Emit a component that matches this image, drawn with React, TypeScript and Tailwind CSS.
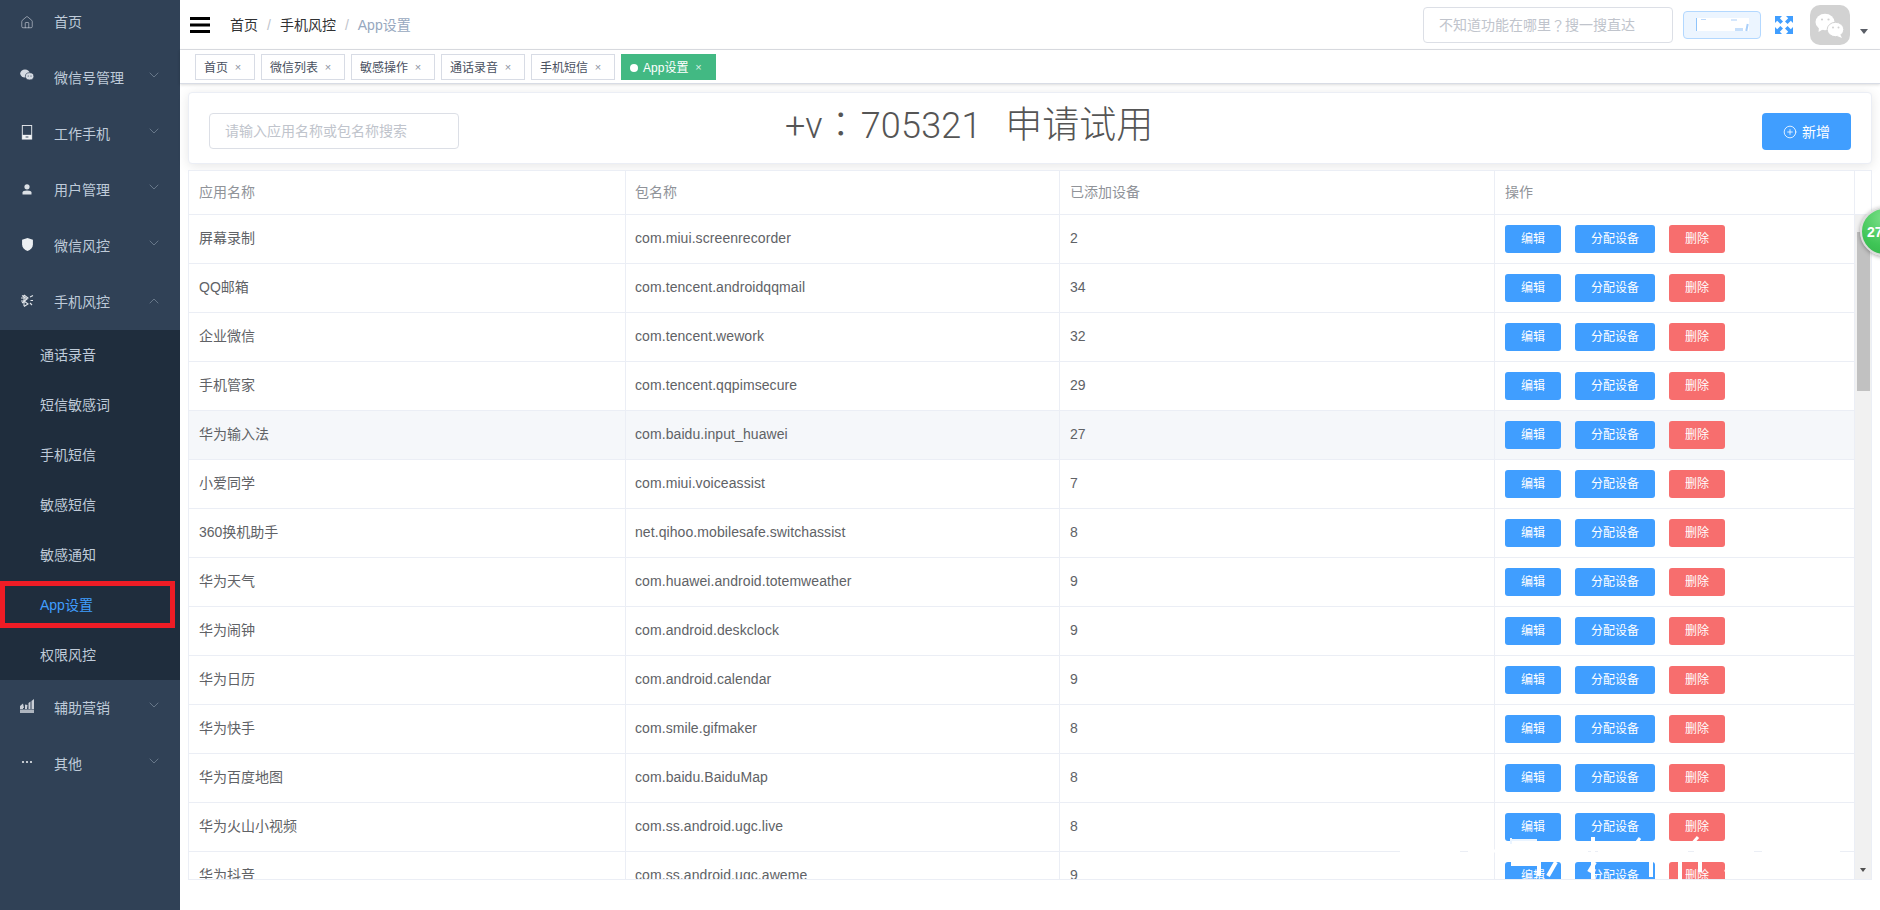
import React from "react";
import { ChevronDown, ChevronUp, CirclePlus, House } from "lucide-react";

const WeChat = () => (
  <svg viewBox="0 0 14 12" className="h-[12px] w-[14px] -translate-y-px" fill="#d5dbe3">
    <ellipse cx="5" cy="4.5" rx="4.8" ry="4" />
    <ellipse cx="9.6" cy="7.3" rx="4.2" ry="3.6" stroke="#304156" strokeWidth="0.7" />
    <circle cx="8.2" cy="7" r="0.6" fill="#304156" />
    <circle cx="11" cy="7" r="0.6" fill="#304156" />
  </svg>
);
const Phone = () => (
  <svg viewBox="0 0 12 16" className="h-[15px] w-[12px]">
    <rect x="1" y="0.5" width="10" height="14.5" fill="none" stroke="#e6e9ed" />
    <rect x="1" y="10.5" width="10" height="4.5" fill="#f1f3f5" />
    <rect x="4.5" y="12.3" width="3" height="1" fill="#304156" />
  </svg>
);
const UserIco = () => (
  <svg viewBox="0 0 10 11" className="h-[11px] w-[10px] translate-y-px" fill="#dbe0e6">
    <circle cx="5" cy="2.8" r="2.6" />
    <path d="M0.5 10.5V8.6C0.5 7.2 2 6.4 5 6.4s4.5.8 4.5 2.2v1.9z" />
  </svg>
);
const Shield = () => (
  <svg viewBox="0 0 10 12" className="h-[13px] w-[11px]" fill="#eceff2">
    <path d="M5 0 10 1.5V6c0 3-2.2 5-5 6-2.8-1-5-3-5-6V1.5z" />
  </svg>
);
const Spiky = () => (
  <svg viewBox="0 0 14 13" className="h-[13px] w-[14px]" fill="none" stroke="#dfe3e8" strokeWidth="1.1">
    <path d="M2 1.5 7 5 2 9M4 1v11M4 1l4 3-4 3 4 3-4 2.5M10 3l3-1.5M10.5 6.5H13M10 9l2 2" />
    <path d="M1 4h3M1 7h3" />
  </svg>
);
const Chart = () => (
  <svg viewBox="0 0 14 14" className="h-[14px] w-[14px]" fill="#c9ced6">
    <path d="M0 7 3 4.5 4 9H3v1H0zM5 5.5 7.5 6 7 10H5zM8.5 4l2-1.5V10h-2zM11.5 2 14 0v10h-2.5z" />
    <rect x="0" y="10.5" width="14" height="3.5" fill="#aeb5bf" />
  </svg>
);
const Dots = () => (
  <svg viewBox="0 0 14 4" className="h-[4px] w-[14px]" fill="#e6e9ed">
    <circle cx="3" cy="2" r="1.1" />
    <circle cx="7" cy="2" r="1.1" />
    <circle cx="11" cy="2" r="1.1" />
  </svg>
);

function MenuItem({ icon, label, arrow }: { icon: React.ReactNode; label: string; arrow?: "up" | "down" }) {
  return (
    <div className="flex h-[56px] items-center text-sm text-[#bfcbd9]">
      <span className="ml-5 mb-1 flex w-[14px] shrink-0 justify-center">{icon}</span>
      <span className="ml-5">{label}</span>
      {arrow === "down" && <ChevronDown size={16} strokeWidth={1} className="ml-auto mr-[18px] mb-[6px] text-[#8492a3]" />}
      {arrow === "up" && <ChevronUp size={16} strokeWidth={1} className="ml-auto mr-[18px] mb-[2px] text-[#8492a3]" />}
    </div>
  );
}

const subItems = ["通话录音", "短信敏感词", "手机短信", "敏感短信", "敏感通知", "App设置", "权限风控"];
const tags = ["首页", "微信列表", "敏感操作", "通话录音", "手机短信"];
const rows: [string, string, string][] = [
  ["屏幕录制", "com.miui.screenrecorder", "2"],
  ["QQ邮箱", "com.tencent.androidqqmail", "34"],
  ["企业微信", "com.tencent.wework", "32"],
  ["手机管家", "com.tencent.qqpimsecure", "29"],
  ["华为输入法", "com.baidu.input_huawei", "27"],
  ["小爱同学", "com.miui.voiceassist", "7"],
  ["360换机助手", "net.qihoo.mobilesafe.switchassist", "8"],
  ["华为天气", "com.huawei.android.totemweather", "9"],
  ["华为闹钟", "com.android.deskclock", "9"],
  ["华为日历", "com.android.calendar", "9"],
  ["华为快手", "com.smile.gifmaker", "8"],
  ["华为百度地图", "com.baidu.BaiduMap", "8"],
  ["华为火山小视频", "com.ss.android.ugc.live", "8"],
  ["华为抖音", "com.ss.android.ugc.aweme", "9"],
];

const Fullscreen = () => (
  <svg viewBox="0 0 18 18" className="h-[18px] w-[18px]" fill="#409eff">
    <path d="M0 0h7L4.8 2.2 8 5.4 5.4 8 2.2 4.8 0 7z" />
    <path d="M18 0h-7l2.2 2.2L10 5.4 12.6 8l3.2-3.2L18 7z" />
    <path d="M0 18h7l-2.2-2.2L8 12.6 5.4 10l-3.2 3.2L0 11z" />
    <path d="M18 18h-7l2.2-2.2-3.2-3.2 2.6-2.6 3.2 3.2L18 11z" />
  </svg>
);

const Avatar = () => (
  <div className="flex h-10 w-10 items-center justify-center rounded-[10px] bg-[#d2d2d2]">
    <svg viewBox="0 0 40 40" className="h-10 w-10">
      <ellipse cx="15" cy="17" rx="9.5" ry="8.3" fill="#fff" />
      <path d="M9 22l-.5 5 5-3z" fill="#fff" />
      <ellipse cx="25.5" cy="24.5" rx="8.3" ry="7.2" fill="#fff" stroke="#d2d2d2" strokeWidth="1" />
      <path d="M30 29l2 4-5-2z" fill="#fff" />
      <circle cx="12" cy="14.5" r="1.1" fill="#d2d2d2" />
      <circle cx="18.5" cy="14.5" r="1.1" fill="#d2d2d2" />
      <circle cx="23" cy="22.5" r="1" fill="#d2d2d2" />
      <circle cx="28.5" cy="22.5" r="1" fill="#d2d2d2" />
    </svg>
  </div>
);

function Row({ r, hover }: { r: [string, string, string]; hover: boolean }) {
  return (
    <div className={`grid h-[49px] shrink-0 grid-cols-[437px_434px_435px_360px] border-b border-[#ebeef5] text-sm text-[#606266] ${hover ? "bg-[#f5f7fa]" : "bg-white"}`}>
      <div className="flex items-center border-r border-[#ebeef5] pb-[2px] pl-[10px]">{r[0]}</div>
      <div className="flex items-center border-r border-[#ebeef5] pb-[2px] pl-[9px] tracking-[0.08px]">{r[1]}</div>
      <div className="flex items-center border-r border-[#ebeef5] pb-[2px] pl-[10px]">{r[2]}</div>
      <div className="flex items-center gap-[14px] border-r border-[#ebeef5] pl-[10px] text-xs text-white">
        <span className="flex h-7 w-14 items-center justify-center rounded-[3px] bg-[#409eff]">编辑</span>
        <span className="flex h-7 w-20 items-center justify-center rounded-[3px] bg-[#409eff]">分配设备</span>
        <span className="flex h-7 w-14 items-center justify-center rounded-[3px] bg-[#f76e6e]">删除</span>
      </div>
    </div>
  );
}

export default function App() {
  return (
    <div className="relative flex h-[910px] w-[1880px] overflow-hidden bg-white font-[family-name:'Liberation_Sans','Noto_Sans_CJK_SC',sans-serif]">
      <aside className="w-[180px] shrink-0 overflow-hidden bg-[#304156]">
        <div className="-mt-[6px]">
          <MenuItem icon={<House size={17} strokeWidth={1} className="translate-y-[2px] text-[#d5dbe3]" />} label="首页" />
          <MenuItem icon={<WeChat />} label="微信号管理" arrow="down" />
          <MenuItem icon={<Phone />} label="工作手机" arrow="down" />
          <MenuItem icon={<UserIco />} label="用户管理" arrow="down" />
          <MenuItem icon={<Shield />} label="微信风控" arrow="down" />
          <MenuItem icon={<Spiky />} label="手机风控" arrow="up" />
          <div className="bg-[#1f2d3d]">
            {subItems.map((s) => (
              <div key={s} className={`flex h-[50px] items-center pl-10 text-sm ${s === "App设置" ? "text-[#409eff]" : "text-[#bfcbd9]"}`}>
                {s}
              </div>
            ))}
          </div>
          <MenuItem icon={<Chart />} label="辅助营销" arrow="down" />
          <MenuItem icon={<Dots />} label="其他" arrow="down" />
        </div>
      </aside>

      <main className="flex w-[1700px] flex-col">
        <header className="flex h-[50px] shrink-0 items-center border-b border-[#dfe1e6] pl-[10px]">
          <svg viewBox="0 0 20 16" className="h-4 w-5">
            <rect y="0" width="20" height="3" fill="#000" />
            <rect y="6.5" width="20" height="3" fill="#000" />
            <rect y="13" width="20" height="3" fill="#000" />
          </svg>
          <nav className="ml-5 flex text-sm text-[#303133]">
            <span>首页</span>
            <span className="mx-[9px] text-[#c0c4cc]">/</span>
            <span>手机风控</span>
            <span className="mx-[9px] text-[#c0c4cc]">/</span>
            <span className="text-[#97a8be]">App设置</span>
          </nav>
          <div className="ml-auto flex h-9 w-[250px] items-center rounded border border-[#dcdfe6] pl-[15px] text-sm text-[#c0c4cc]">
            不知道功能在哪里<span className="font-[family-name:'Noto_Sans_CJK_TC',sans-serif]">？</span>搜一搜直达
          </div>
          <div className="ml-[10px] flex h-7 w-[78px] items-center justify-center rounded border border-[#b3d8ff] bg-[#ecf5ff]">
            <div className="relative h-[13px] w-[53px] border-l border-[#8fc4fb] bg-white">
              <span className="absolute left-[4px] top-[1px] h-[1px] w-[5px] bg-[#bcd9fb]" />
              <span className="absolute right-[12px] top-[1px] h-[2px] w-[6px] bg-[#d5e7fc]" />
              <span className="absolute right-[1px] bottom-0 h-[7px] w-[2px] rotate-12 bg-[#a9cffa]" />
              <span className="absolute right-[6px] bottom-0 h-[3px] w-[8px] bg-[#c6dffb]" />
            </div>
          </div>
          <div className="ml-[14px] flex">
            <Fullscreen />
          </div>
          <div className="ml-[17px]">
            <Avatar />
          </div>
          <span className="mt-[14px] ml-[10px] h-0 w-0 border-x-[4px] border-t-[5px] border-x-transparent border-t-[#5a5e66]" />
          <span className="w-[12px]" />
        </header>

        <div className="flex h-[34px] shrink-0 items-start border-b border-[#d8dce5] pl-[15px] pt-[4px] shadow-[0_1px_3px_0_rgba(0,0,0,0.12),0_0_3px_0_rgba(0,0,0,0.04)]">
          {tags.map((t) => (
            <div key={t} className="mr-[6px] flex h-[26px] items-center border border-[#d8dce5] bg-white pl-2 pr-[8px] pt-px text-xs text-[#495060]">
              {t}
              <span className="ml-[2px] flex w-[16px] justify-center text-[11px] text-[#8d94a3]">×</span>
            </div>
          ))}
          <div className="flex h-[26px] w-[95px] items-center bg-[#42b983] pl-[9px] pt-px text-xs text-white">
            <span className="mr-[5px] h-2 w-2 rounded-full bg-white" />
            App设置
            <span className="ml-[3px] flex w-[14px] justify-center text-[11px] text-[#d8f0e5]">×</span>
          </div>
        </div>

        <div className="flex flex-1 flex-col pl-2 pr-2 pt-2">
          <section className="flex h-[72px] shrink-0 items-start rounded border border-[#ebeef5] bg-white pl-5 pr-5 pt-5 shadow-[0_2px_12px_0_rgba(0,0,0,0.1)]">
            <div className="flex h-9 w-[250px] items-center rounded border border-[#dcdfe6] pl-[15px] text-sm text-[#c0c4cc]">
              请输入应用名称或包名称搜索
            </div>
            <div className="-mt-[18px] ml-[326px] whitespace-pre font-[family-name:'Roboto','Noto_Sans_CJK_SC',sans-serif] text-[36px] font-light leading-[54px] text-[#555]">
              +v<span className="font-[family-name:'Noto_Sans_CJK_TC',sans-serif]">：</span>
              <span className="ml-[2px] tracking-[0.2px]">705321</span>{"  "}
              <span className="ml-[6px] text-[37px]">申请试用</span>
            </div>
            <button className="ml-auto flex h-[37px] w-[89px] items-center justify-center gap-[5px] rounded bg-[#409eff] text-sm text-white">
              <CirclePlus size={14} strokeWidth={1.4} />
              新增
            </button>
          </section>

          <section className="mt-[6px] flex h-[710px] shrink-0 flex-col overflow-hidden border border-[#ebeef5] bg-white">
            <div className="grid h-[44px] shrink-0 grid-cols-[437px_434px_435px_360px_16px] border-b border-[#ebeef5] text-sm text-[#909399]">
              <div className="flex items-center border-r border-[#ebeef5] pb-[2px] pl-[10px]">应用名称</div>
              <div className="flex items-center border-r border-[#ebeef5] pb-[2px] pl-[9px]">包名称</div>
              <div className="flex items-center border-r border-[#ebeef5] pb-[2px] pl-[10px]">已添加设备</div>
              <div className="flex items-center border-r border-[#ebeef5] pb-[2px] pl-[10px]">操作</div>
              <div />
            </div>
            <div className="flex min-h-0 flex-1">
              <div className="flex w-[1666px] flex-col overflow-hidden">
                {rows.map((r, i) => (
                  <Row key={r[1]} r={r} hover={i === 4} />
                ))}
              </div>
              <div className="flex w-4 flex-col bg-[#f1f1f1]">
                <div className="ml-[2px] mt-[17px] h-[159px] w-[13px] bg-[#c1c1c1]" />
                <span className="ml-[5px] mt-auto mb-[7px] h-0 w-0 border-x-[3.5px] border-t-[4px] border-x-transparent border-t-[#505050]" />
              </div>
            </div>
          </section>
        </div>
      </main>

      {/* 截图中的红色标注框 */}
      <div className="absolute left-0 top-[581px] h-[47px] w-[175px] border-[5px] border-[#ee1c25]" />

      {/* 悬浮绿色角标 */}
      <div className="absolute left-[1860px] top-[207px] flex h-[49px] w-[49px] items-center rounded-full border-[2px] border-[#dcdcdc] bg-[radial-gradient(circle_at_50%_20%,#7be08a,#3fc556_65%,#37b44c)] pl-[5px] text-sm font-bold text-white shadow-[0_1px_4px_rgba(0,0,0,0.35)]">
        27
      </div>

      {/* 白色水印残笔 */}
      <svg className="pointer-events-none absolute left-[1380px] top-[835px] h-[46px] w-[480px]" viewBox="0 0 480 46" fill="none" stroke="#fff" strokeWidth="3">
        <path d="M20 16h440" strokeWidth="3" strokeDasharray="60 8 120 10 90 6" />
        <path d="M131 5h26M131 9V3" strokeWidth="2" stroke="#eaf4ff" />
        <path d="M131 29h28v12" strokeWidth="4" />
        <path d="M176 27l-8 14M215 27l-6 10" strokeWidth="4" />
        <path d="M213 2v42M271 27v15" strokeWidth="4" />
        <path d="M260 3l-6 8M318 2l-7 8M352 3l4 6" strokeWidth="3" />
        <path d="M300 27v18M320 27v10M350 27l-4 10" strokeWidth="4" />
      </svg>
    </div>
  );
}
